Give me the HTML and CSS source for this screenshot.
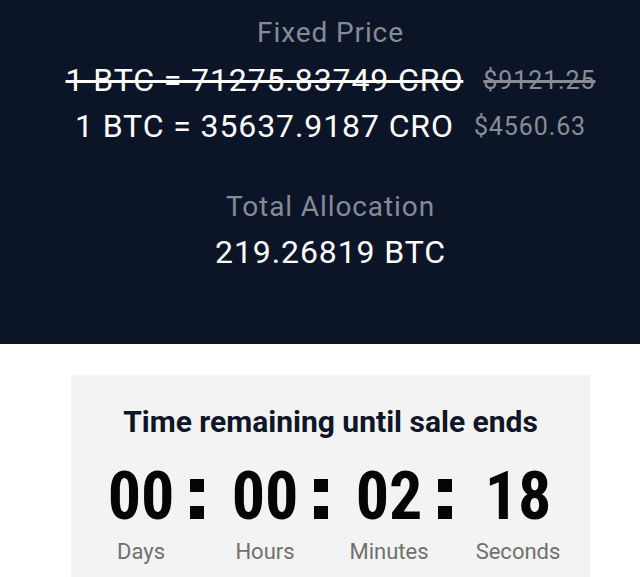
FILE: index.html
```html
<!DOCTYPE html>
<html>
<head>
  <title>Sale</title>
  <link rel="stylesheet" href="styles.css">
</head>
<body>
  <section class="hero">
    <div class="label">Fixed Price</div>
    <div class="prices">
      <div class="price-row old">
        <span class="rate">1 BTC = 71275.83749 CRO</span>
        <span class="usd">$9121.25</span>
      </div>
      <div class="price-row">
        <span class="rate">1 BTC = 35637.9187 CRO</span>
        <span class="usd">$4560.63</span>
      </div>
    </div>
    <div class="label label-alloc">Total Allocation</div>
    <div class="value">219.26819 BTC</div>
  </section>

  <section class="countdown">
    <div class="card">
      <h2>Time remaining until sale ends</h2>
      <div class="timer">
        <div class="unit"><span class="num">00</span><span class="name">Days</span></div>
        <span class="sep"></span>
        <div class="unit"><span class="num">00</span><span class="name">Hours</span></div>
        <span class="sep"></span>
        <div class="unit"><span class="num">02</span><span class="name">Minutes</span></div>
        <span class="sep sep-last"></span>
        <div class="unit"><span class="num">18</span><span class="name">Seconds</span></div>
      </div>
    </div>
  </section>
</body>
</html>
```

FILE: styles.css
```css
body {
  margin: 0;
  font-family: Roboto, "Noto Sans", sans-serif;
  background-color: #fff;
}

.hero {
  background-color: #0c1527;
  color: #fff;
  height: 344px;
  padding: 11px 0 0 21px;
  box-sizing: border-box;
  text-align: center;
  letter-spacing: 0.9px;
}

.label {
  color: #858a96;
  font-size: 28px;
  line-height: 44px;
}

.prices {
  margin-top: 2px;
}

.price-row {
  display: flex;
  justify-content: center;
  align-items: center;
  gap: 20px;
  height: 46px;
}

.rate {
  font-size: 32px;
}

.usd {
  font-size: 25px;
  color: #878c97;
}

.old .rate,
.old .usd {
  text-decoration: line-through;
  text-decoration-thickness: 2.5px;
}

.label-alloc {
  margin-top: 36px;
}

.value {
  font-size: 32px;
  line-height: 46px;
}

.countdown {
  padding: 31px 50px 0 71px;
}

.card {
  background-color: #f3f3f3;
  padding: 27px 0 20px;
  text-align: center;
}

.card h2 {
  margin: 0;
  font-size: 30px;
  line-height: 40px;
  font-weight: 700;
  color: #0e1628;
}

.timer {
  display: flex;
  align-items: flex-start;
  padding: 20px 0 0 22px;
}

.unit {
  display: flex;
  flex-direction: column;
  align-items: center;
  width: 96px;
}

.num {
  font-size: 66px;
  font-weight: 700;
  line-height: 70px;
  font-stretch: 79%;
  color: #050505;
}

.name {
  font-size: 22px;
  line-height: 28px;
  color: #707070;
  margin-top: 6px;
}

.sep {
  flex: none;
  width: 14px;
  height: 40px;
  margin: 17px 13px 0 1px;
  background: linear-gradient(#050505 0 13px, transparent 13px 27px, #050505 27px);
}

.sep-last {
  margin-right: 18px;
}
```
